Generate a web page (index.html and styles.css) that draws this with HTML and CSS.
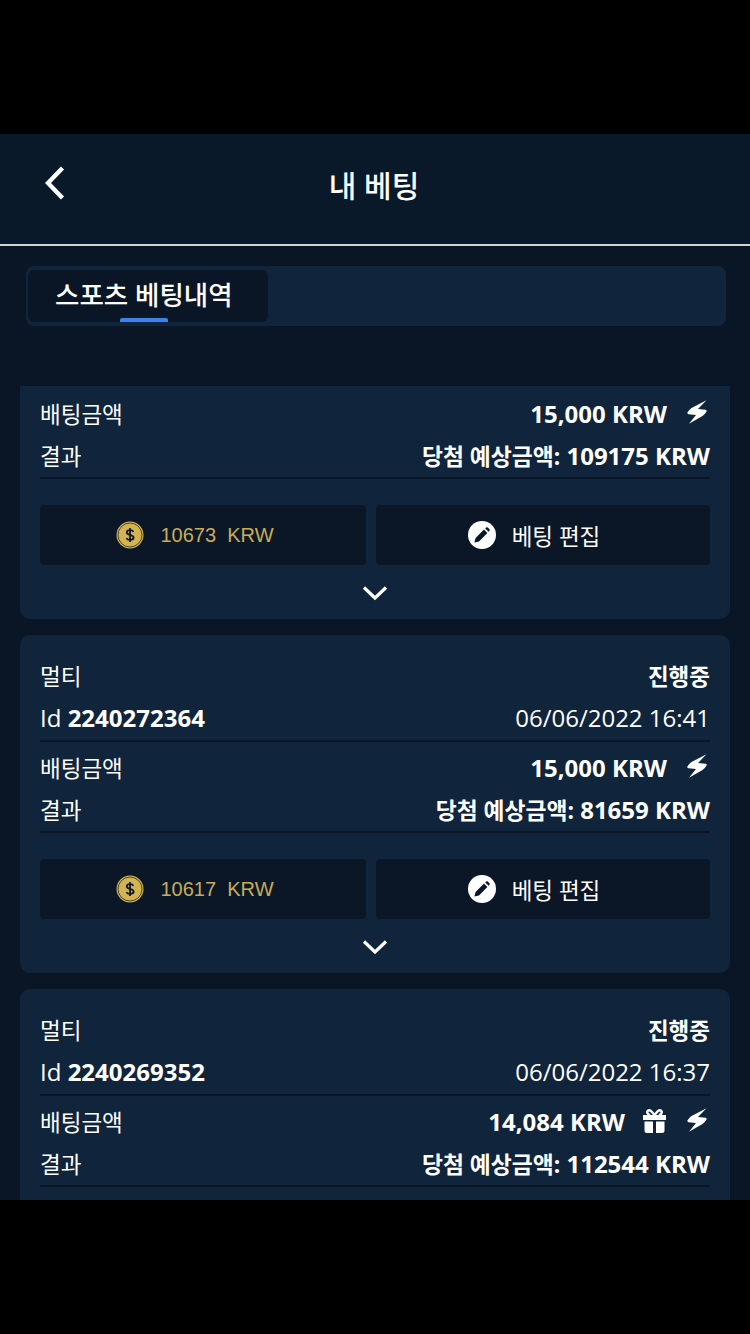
FILE: index.html
```html
<!DOCTYPE html>
<html lang="ko">
<head>
<meta charset="UTF-8">
<title>내 베팅</title>
<link rel="stylesheet" href="styles.css">
</head>
<body>
	<svg class="defs" width="0" height="0">
		<symbol id="bolt" viewBox="0 0 20 24">
			<path d="M19.5 0.3 L4.5 8 Q2 9.8 0.4 12.6 Q0 14 1.5 14.2 L9 15 L2 23.8 L15.5 16 Q18 14 19.6 11.4 Q20 10 18.5 9.8 L11 9 Z" fill="#fff"/>
		</symbol>
		<symbol id="coin" viewBox="0 0 28 28">
			<circle cx="14" cy="14" r="13.5" fill="#d4b450"/>
			<circle cx="14" cy="14" r="12" fill="none" stroke="#0b1726" stroke-width="0.7"/>
			<path d="M17.4 10.8 C16.9 9.7 15.7 9.2 14 9.2 C12 9.2 10.8 10.1 10.8 11.4 C10.8 14.6 17.6 13.2 17.6 16.6 C17.6 18 16.2 18.9 14 18.9 C12.2 18.9 11 18.3 10.4 17.1 M14 7 V21" fill="none" stroke="#0b1726" stroke-width="1.8"/>
		</symbol>
		<symbol id="pen" viewBox="0 0 28 28">
			<circle cx="14" cy="14" r="14" fill="#fff"/>
			<path d="M7 21 L8.2 16.4 L16.6 8 L20 11.4 L11.6 19.8 Z M17.8 6.8 L18.8 5.9 Q19.6 5.3 20.4 5.9 L22.1 7.6 Q22.7 8.4 22.1 9.2 L21.2 10.2 Z" fill="#0b1726" transform="translate(-0.6 0.6)"/>
		</symbol>
		<symbol id="chev" viewBox="0 0 26 16">
			<path d="M2 2.5 L13 13 L24 2.5" fill="none" stroke="#fff" stroke-width="3.2"/>
		</symbol>
	</svg>

	<div id="main">
		<header class="topbar">
			<svg class="back" width="20" height="34" viewBox="0 0 20 34">
				<path d="M17.5 2 L3 17 L17.5 32" fill="none" stroke="#fff" stroke-width="4.4"/>
			</svg>
			<h2 class="title">내 베팅</h2>
		</header>

		<div class="tabs">
			<div class="tab">스포츠 베팅내역<span class="tab-mark"></span></div>
		</div>

		<div class="list">
			<section class="card card-cut">
				<div class="block">
					<div class="row"><span class="ko">배팅금액</span><span class="val">15,000 KRW<svg class="ic-bolt"><use href="#bolt"/></svg></span></div>
					<div class="row"><span class="ko">결과</span><b><span class="ko">당첨 예상금액:</span> 109175 KRW</b></div>
				</div>
				<div class="btns">
					<div class="btn btn-gold"><svg class="ic"><use href="#coin"/></svg>10673&nbsp; KRW</div>
					<div class="btn btn-edit"><svg class="ic"><use href="#pen"/></svg><span class="ko">베팅 편집</span></div>
				</div>
				<div class="more"><svg class="ic-chev"><use href="#chev"/></svg></div>
			</section>

			<section class="card">
				<div class="block">
					<div class="row"><span class="ko">멀티</span><b class="ko">진행중</b></div>
					<div class="row"><span>Id <b>2240272364</b></span><span>06/06/2022 16:41</span></div>
				</div>
				<div class="block">
					<div class="row"><span class="ko">배팅금액</span><span class="val">15,000 KRW<svg class="ic-bolt"><use href="#bolt"/></svg></span></div>
					<div class="row"><span class="ko">결과</span><b><span class="ko">당첨 예상금액:</span> 81659 KRW</b></div>
				</div>
				<div class="btns">
					<div class="btn btn-gold"><svg class="ic"><use href="#coin"/></svg>10617&nbsp; KRW</div>
					<div class="btn btn-edit"><svg class="ic"><use href="#pen"/></svg><span class="ko">베팅 편집</span></div>
				</div>
				<div class="more"><svg class="ic-chev"><use href="#chev"/></svg></div>
			</section>

			<section class="card card-last">
				<div class="block">
					<div class="row"><span class="ko">멀티</span><b class="ko">진행중</b></div>
					<div class="row"><span>Id <b>2240269352</b></span><span>06/06/2022 16:37</span></div>
				</div>
				<div class="block">
					<div class="row"><span class="ko">배팅금액</span><span class="val">14,084 KRW
						<svg class="ic-gift" viewBox="0 0 25 24">
							<path d="M1 6 H24 V11 H1 Z M2.5 12.5 H11 V24 H5 Q2.5 24 2.5 21.5 Z M14 12.5 H22.5 V21.5 Q22.5 24 20 24 H14 Z" fill="#fff"/>
							<path d="M12.5 6 L9 2 Q7.2 0.8 5.8 1.8 Q4.6 3.4 6 5 L8 6 M12.5 6 L16 2 Q17.8 0.8 19.2 1.8 Q20.4 3.4 19 5 L17 6" fill="none" stroke="#fff" stroke-width="2.4"/>
						</svg><svg class="ic-bolt"><use href="#bolt"/></svg></span></div>
					<div class="row"><span class="ko">결과</span><b><span class="ko">당첨 예상금액:</span> 112544 KRW</b></div>
				</div>
			</section>
		</div>
	</div>
</body>
</html>
```

FILE: styles.css
```css
body {
	margin: 0;
	height: 1334px;
	overflow: hidden;
	background-color: #000;
	color: #fff;
	font-family: "Open Sans", "Noto Sans CJK KR", sans-serif;
	font-size: 24px;
}

.defs {
	position: absolute;
}

.ko {
	font-size: 22.5px;
}

b .ko {
	font-size: 22.8px;
}

#main {
	margin-top: 134px;
	height: 1066px;
	overflow: hidden;
	background-color: #0a1625;
	display: flex;
	flex-direction: column;
}

.topbar {
	flex: none;
	box-sizing: border-box;
	background-color: #0a192a;
	border-bottom: 2px solid #d4d4d4;
	display: flex;
	align-items: center;
	justify-content: center;
	height: 112px;
	padding: 0 2px 6px 0;
}

.back {
	position: absolute;
	left: 45px;
	top: 166px;
}

.title {
	margin: 0;
	font-size: 30px;
	font-weight: 500;
	line-height: 40px;
}

.tabs {
	margin: 20px 24px 0 26px;
	height: 60px;
	flex: none;
	box-sizing: border-box;
	padding: 4px 2px 4px;
	background-color: #10243b;
	border-radius: 8px;
}

.tab {
	position: relative;
	width: 240px;
	height: 52px;
	box-sizing: border-box;
	padding: 6px 0 0 27px;
	background-color: #0a1625;
	border-radius: 6px;
	font-size: 26.5px;
	font-weight: 500;
	line-height: 38px;
}

.tab-mark {
	position: absolute;
	left: 92px;
	bottom: 0;
	width: 48px;
	height: 4px;
	background-color: #3a82ec;
	border-radius: 2px 2px 0 0;
}

.list {
	margin: 60px 20px 0;
	flex: 1;
	min-height: 0;
	overflow: hidden;
	display: flex;
	flex-direction: column;
	gap: 16px;
}

.card {
	flex: none;
	padding: 20px 20px 0;
	background-color: #10243b;
	border-radius: 10px;
}

.card-cut {
	padding-top: 7px;
	border-radius: 0 0 10px 10px;
}

.card-last {
	padding-bottom: 60px;
}

.block {
	border-bottom: 2px solid #0a1625;
	margin-bottom: 5px;
}

.row {
	height: 42px;
	box-sizing: border-box;
	padding-bottom: 2px;
	display: flex;
	align-items: center;
	justify-content: space-between;
}

.block:first-child .row:first-child {
	margin-bottom: 1px;
}

.block:first-child .row + .row {
	padding-bottom: 4px;
}

.card-cut .block:first-child .row:first-child {
	margin-bottom: 0;
}

.card-cut .block:first-child .row + .row {
	padding-bottom: 2px;
}

.row b,
.val {
	font-weight: 700;
}

.val {
	display: flex;
	align-items: center;
}

.ic-bolt {
	width: 20px;
	height: 24px;
	margin: -2px 3px 0 20px;
}

.ic-gift {
	width: 25px;
	height: 24px;
	margin: 0 0 0 17px;
}

.ic-gift + .ic-bolt {
	margin-left: 20px;
}

.btns {
	margin-top: 26px;
	display: grid;
	grid-template-columns: 326px 334px;
	gap: 10px;
}

.btn {
	height: 60px;
	box-sizing: border-box;
	padding-right: 18px;
	background-color: #0b1726;
	border-radius: 4px;
	display: flex;
	align-items: center;
	justify-content: center;
	gap: 16px;
}

.ic {
	width: 28px;
	height: 28px;
	flex: none;
}

.btn-gold {
	color: #c8ac58;
	font-family: "Liberation Sans", sans-serif;
	font-size: 20px;
	padding-right: 16px;
}

.more {
	height: 54px;
	padding-top: 2px;
	box-sizing: border-box;
	display: flex;
	align-items: center;
	justify-content: center;
}

.ic-chev {
	width: 26px;
	height: 16px;
}
```
